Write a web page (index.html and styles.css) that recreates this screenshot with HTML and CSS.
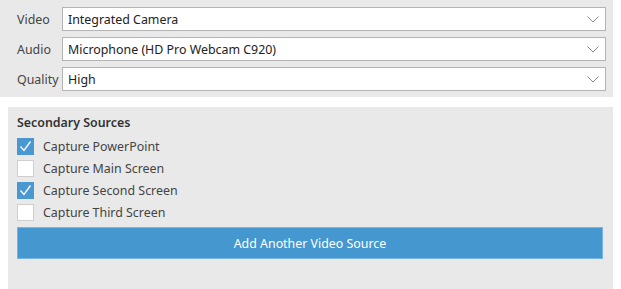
FILE: index.html
```html
<!DOCTYPE html>
<html>
<head>
<meta charset="utf-8">
<link rel="stylesheet" href="styles.css">
</head>
<body>
<div class="devices">
  <label class="lbl">Video</label>
  <div class="select"><span>Integrated Camera</span><svg class="chev" width="12" height="7" viewBox="0 0 12 7"><path d="M0.5 0.5 L6 6 L11.5 0.5" fill="none" stroke="#8a8a8a" stroke-width="1"/></svg></div>
  <label class="lbl">Audio</label>
  <div class="select"><span>Microphone (HD Pro Webcam C920)</span><svg class="chev" width="12" height="7" viewBox="0 0 12 7"><path d="M0.5 0.5 L6 6 L11.5 0.5" fill="none" stroke="#8a8a8a" stroke-width="1"/></svg></div>
  <label class="lbl">Quality</label>
  <div class="select"><span>High</span><svg class="chev" width="12" height="7" viewBox="0 0 12 7"><path d="M0.5 0.5 L6 6 L11.5 0.5" fill="none" stroke="#8a8a8a" stroke-width="1"/></svg></div>
</div>
<div class="secondary">
  <div class="title">Secondary Sources</div>
  <div class="checks">
    <div class="check"><span class="box on"><svg width="17" height="17" viewBox="0 0 17 17"><path d="M3.5 8.5 L7 12.5 L13.5 3.5" fill="none" stroke="#fff" stroke-width="1.3"/></svg></span>Capture PowerPoint</div>
    <div class="check"><span class="box"></span>Capture Main Screen</div>
    <div class="check"><span class="box on"><svg width="17" height="17" viewBox="0 0 17 17"><path d="M3.5 8.5 L7 12.5 L13.5 3.5" fill="none" stroke="#fff" stroke-width="1.3"/></svg></span>Capture Second Screen</div>
    <div class="check"><span class="box"></span>Capture Third Screen</div>
  </div>
  <div class="btn">Add Another Video Source</div>
</div>
</body>
</html>
```
FILE: styles.css
```css
html, body {
  margin: 0;
  padding: 0;
  background: #ffffff;
  font-family: "Noto Sans", "Open Sans", sans-serif;
  font-size: 12.4px;
  color: #333333;
}
.devices {
  width: 613px;
  box-sizing: border-box;
  background: #e9e9e9;
  padding: 7px 7px 6px 17px;
  display: grid;
  grid-template-columns: 45px 1fr;
  row-gap: 6px;
  align-items: center;
}
.lbl {
  color: #444444;
}
.select {
  height: 24px;
  box-sizing: border-box;
  background: #ffffff;
  border: 1px solid #b4b4b4;
  display: flex;
  align-items: center;
  justify-content: space-between;
  padding: 0 6px 0 5px;
  color: #222222;
}
.chev {
  display: block;
}
.secondary {
  margin: 10px 0 0 8px;
  width: 605px;
  height: 182px;
  box-sizing: border-box;
  background: #e9e9e9;
  padding: 6px 10px 0 9px;
}
.title {
  font-weight: 600;
  color: #333333;
  line-height: 20px;
}
.checks {
  margin-top: 5px;
  display: flex;
  flex-direction: column;
  gap: 5px;
}
.check {
  display: flex;
  align-items: center;
  height: 17px;
  gap: 9px;
  color: #444444;
}
.box {
  width: 17px;
  height: 17px;
  box-sizing: border-box;
  background: #ffffff;
  border: 1px solid #cfcfcf;
  display: block;
}
.box.on {
  background: #4a98d2;
  border-color: #4a98d2;
}
.box svg {
  display: block;
  margin: -1px;
}
.btn {
  margin-top: 6px;
  height: 32px;
  box-sizing: border-box;
  background: #4597d0;
  border: 1px solid #76b4e4;
  color: #ffffff;
  display: flex;
  align-items: center;
  justify-content: center;
}
```
